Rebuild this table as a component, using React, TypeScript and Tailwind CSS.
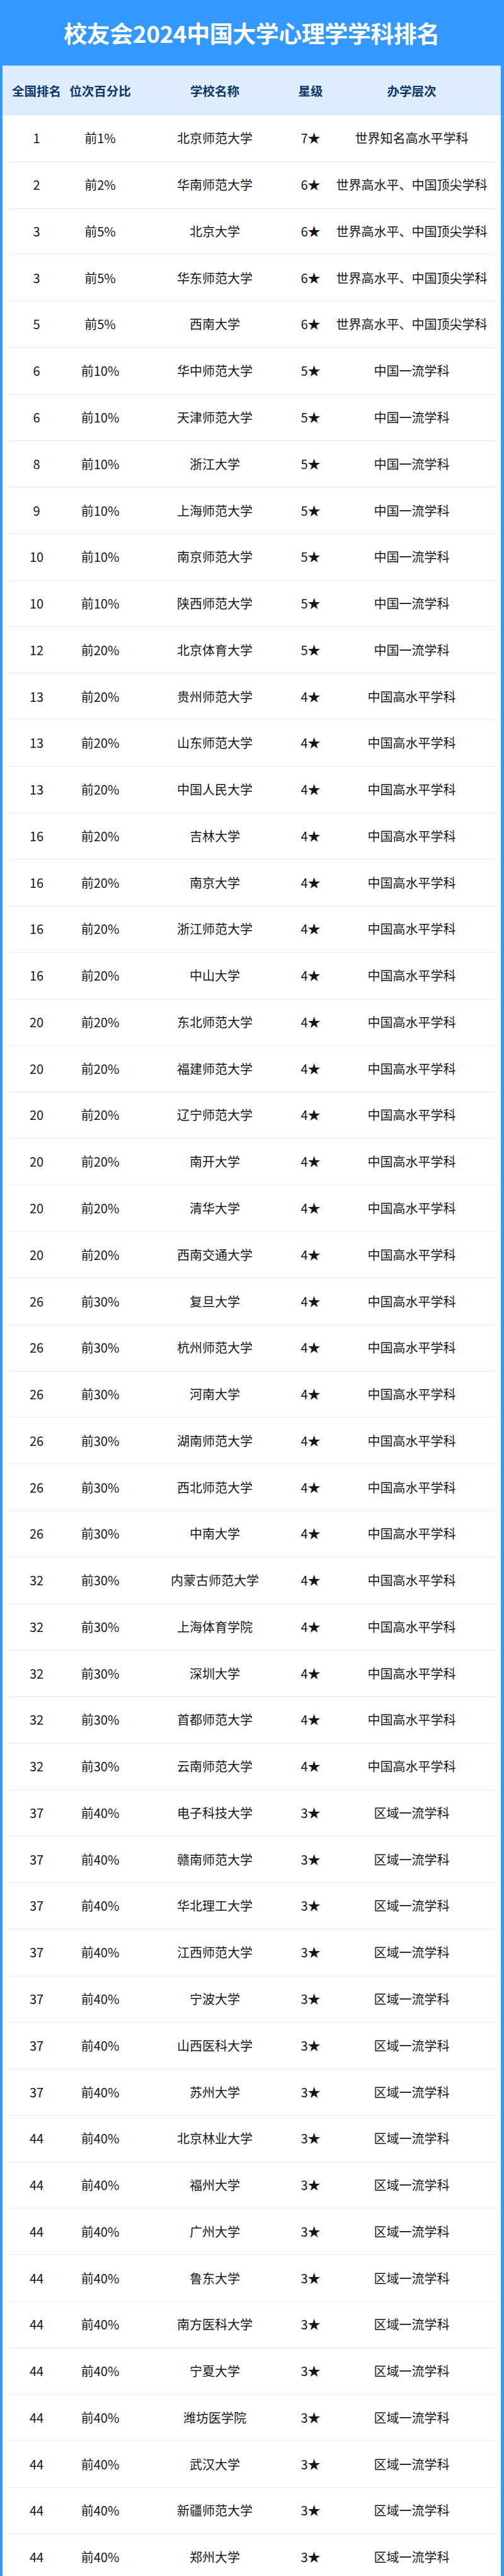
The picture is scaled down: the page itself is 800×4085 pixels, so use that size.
import React from "react";

type Row = [string, string, string, string, string];

const L7 = "世界知名高水平学科";
const L6 = "世界高水平、中国顶尖学科";
const L5 = "中国一流学科";
const L4 = "中国高水平学科";
const L3 = "区域一流学科";

const rows: Row[] = [
    ["1", "前1%", "北京师范大学", "7★", L7],
    ["2", "前2%", "华南师范大学", "6★", L6],
    ["3", "前5%", "北京大学", "6★", L6],
    ["3", "前5%", "华东师范大学", "6★", L6],
    ["5", "前5%", "西南大学", "6★", L6],
    ["6", "前10%", "华中师范大学", "5★", L5],
    ["6", "前10%", "天津师范大学", "5★", L5],
    ["8", "前10%", "浙江大学", "5★", L5],
    ["9", "前10%", "上海师范大学", "5★", L5],
    ["10", "前10%", "南京师范大学", "5★", L5],
    ["10", "前10%", "陕西师范大学", "5★", L5],
    ["12", "前20%", "北京体育大学", "5★", L5],
    ["13", "前20%", "贵州师范大学", "4★", L4],
    ["13", "前20%", "山东师范大学", "4★", L4],
    ["13", "前20%", "中国人民大学", "4★", L4],
    ["16", "前20%", "吉林大学", "4★", L4],
    ["16", "前20%", "南京大学", "4★", L4],
    ["16", "前20%", "浙江师范大学", "4★", L4],
    ["16", "前20%", "中山大学", "4★", L4],
    ["20", "前20%", "东北师范大学", "4★", L4],
    ["20", "前20%", "福建师范大学", "4★", L4],
    ["20", "前20%", "辽宁师范大学", "4★", L4],
    ["20", "前20%", "南开大学", "4★", L4],
    ["20", "前20%", "清华大学", "4★", L4],
    ["20", "前20%", "西南交通大学", "4★", L4],
    ["26", "前30%", "复旦大学", "4★", L4],
    ["26", "前30%", "杭州师范大学", "4★", L4],
    ["26", "前30%", "河南大学", "4★", L4],
    ["26", "前30%", "湖南师范大学", "4★", L4],
    ["26", "前30%", "西北师范大学", "4★", L4],
    ["26", "前30%", "中南大学", "4★", L4],
    ["32", "前30%", "内蒙古师范大学", "4★", L4],
    ["32", "前30%", "上海体育学院", "4★", L4],
    ["32", "前30%", "深圳大学", "4★", L4],
    ["32", "前30%", "首都师范大学", "4★", L4],
    ["32", "前30%", "云南师范大学", "4★", L4],
    ["37", "前40%", "电子科技大学", "3★", L3],
    ["37", "前40%", "赣南师范大学", "3★", L3],
    ["37", "前40%", "华北理工大学", "3★", L3],
    ["37", "前40%", "江西师范大学", "3★", L3],
    ["37", "前40%", "宁波大学", "3★", L3],
    ["37", "前40%", "山西医科大学", "3★", L3],
    ["37", "前40%", "苏州大学", "3★", L3],
    ["44", "前40%", "北京林业大学", "3★", L3],
    ["44", "前40%", "福州大学", "3★", L3],
    ["44", "前40%", "广州大学", "3★", L3],
    ["44", "前40%", "鲁东大学", "3★", L3],
    ["44", "前40%", "南方医科大学", "3★", L3],
    ["44", "前40%", "宁夏大学", "3★", L3],
    ["44", "前40%", "潍坊医学院", "3★", L3],
    ["44", "前40%", "武汉大学", "3★", L3],
    ["44", "前40%", "新疆师范大学", "3★", L3],
    ["44", "前40%", "郑州大学", "3★", L3],
];

const cols = "grid grid-cols-[88px_114px_250px_54px_267px] items-center text-center";

const App: React.FC = () => {
    return (
        <div
            className="w-[800px] h-[4085px] overflow-hidden bg-[#3399ff] pl-[4px] pr-[5px]"
            style={{ fontFamily: '"Noto Sans CJK SC", "Noto Sans", sans-serif' }}
        >
            <div className="h-[104px] flex items-center justify-center">
                <h1 className="text-white font-bold text-[37px] tracking-[-0.5px] leading-none">
                    校友会2024中国大学心理学学科排名
                </h1>
            </div>
            <div className="h-[79px] bg-[#ddedfd] border-t border-[#cfe6fe] pl-[10px] pr-[8px]">
                <div className={`${cols} h-full text-[#0c3669] font-bold text-[19.5px]`}>
                    <div>全国排名</div>
                    <div>位次百分比</div>
                    <div>学校名称</div>
                    <div>星级</div>
                    <div>办学层次</div>
                </div>
            </div>
            <div className="bg-white pl-[10px] pr-[8px]">
                {rows.map((r, i) => (
                    <div
                        key={i}
                        className={`${cols} h-[73.77px] border-b border-[#e6e8ec] text-[20px] text-[#161616]`}
                    >
                        <div>{r[0]}</div>
                        <div>{r[1]}</div>
                        <div>{r[2]}</div>
                        <div>{r[3]}</div>
                        <div>{r[4]}</div>
                    </div>
                ))}
            </div>
        </div>
    );
};

export default App;
